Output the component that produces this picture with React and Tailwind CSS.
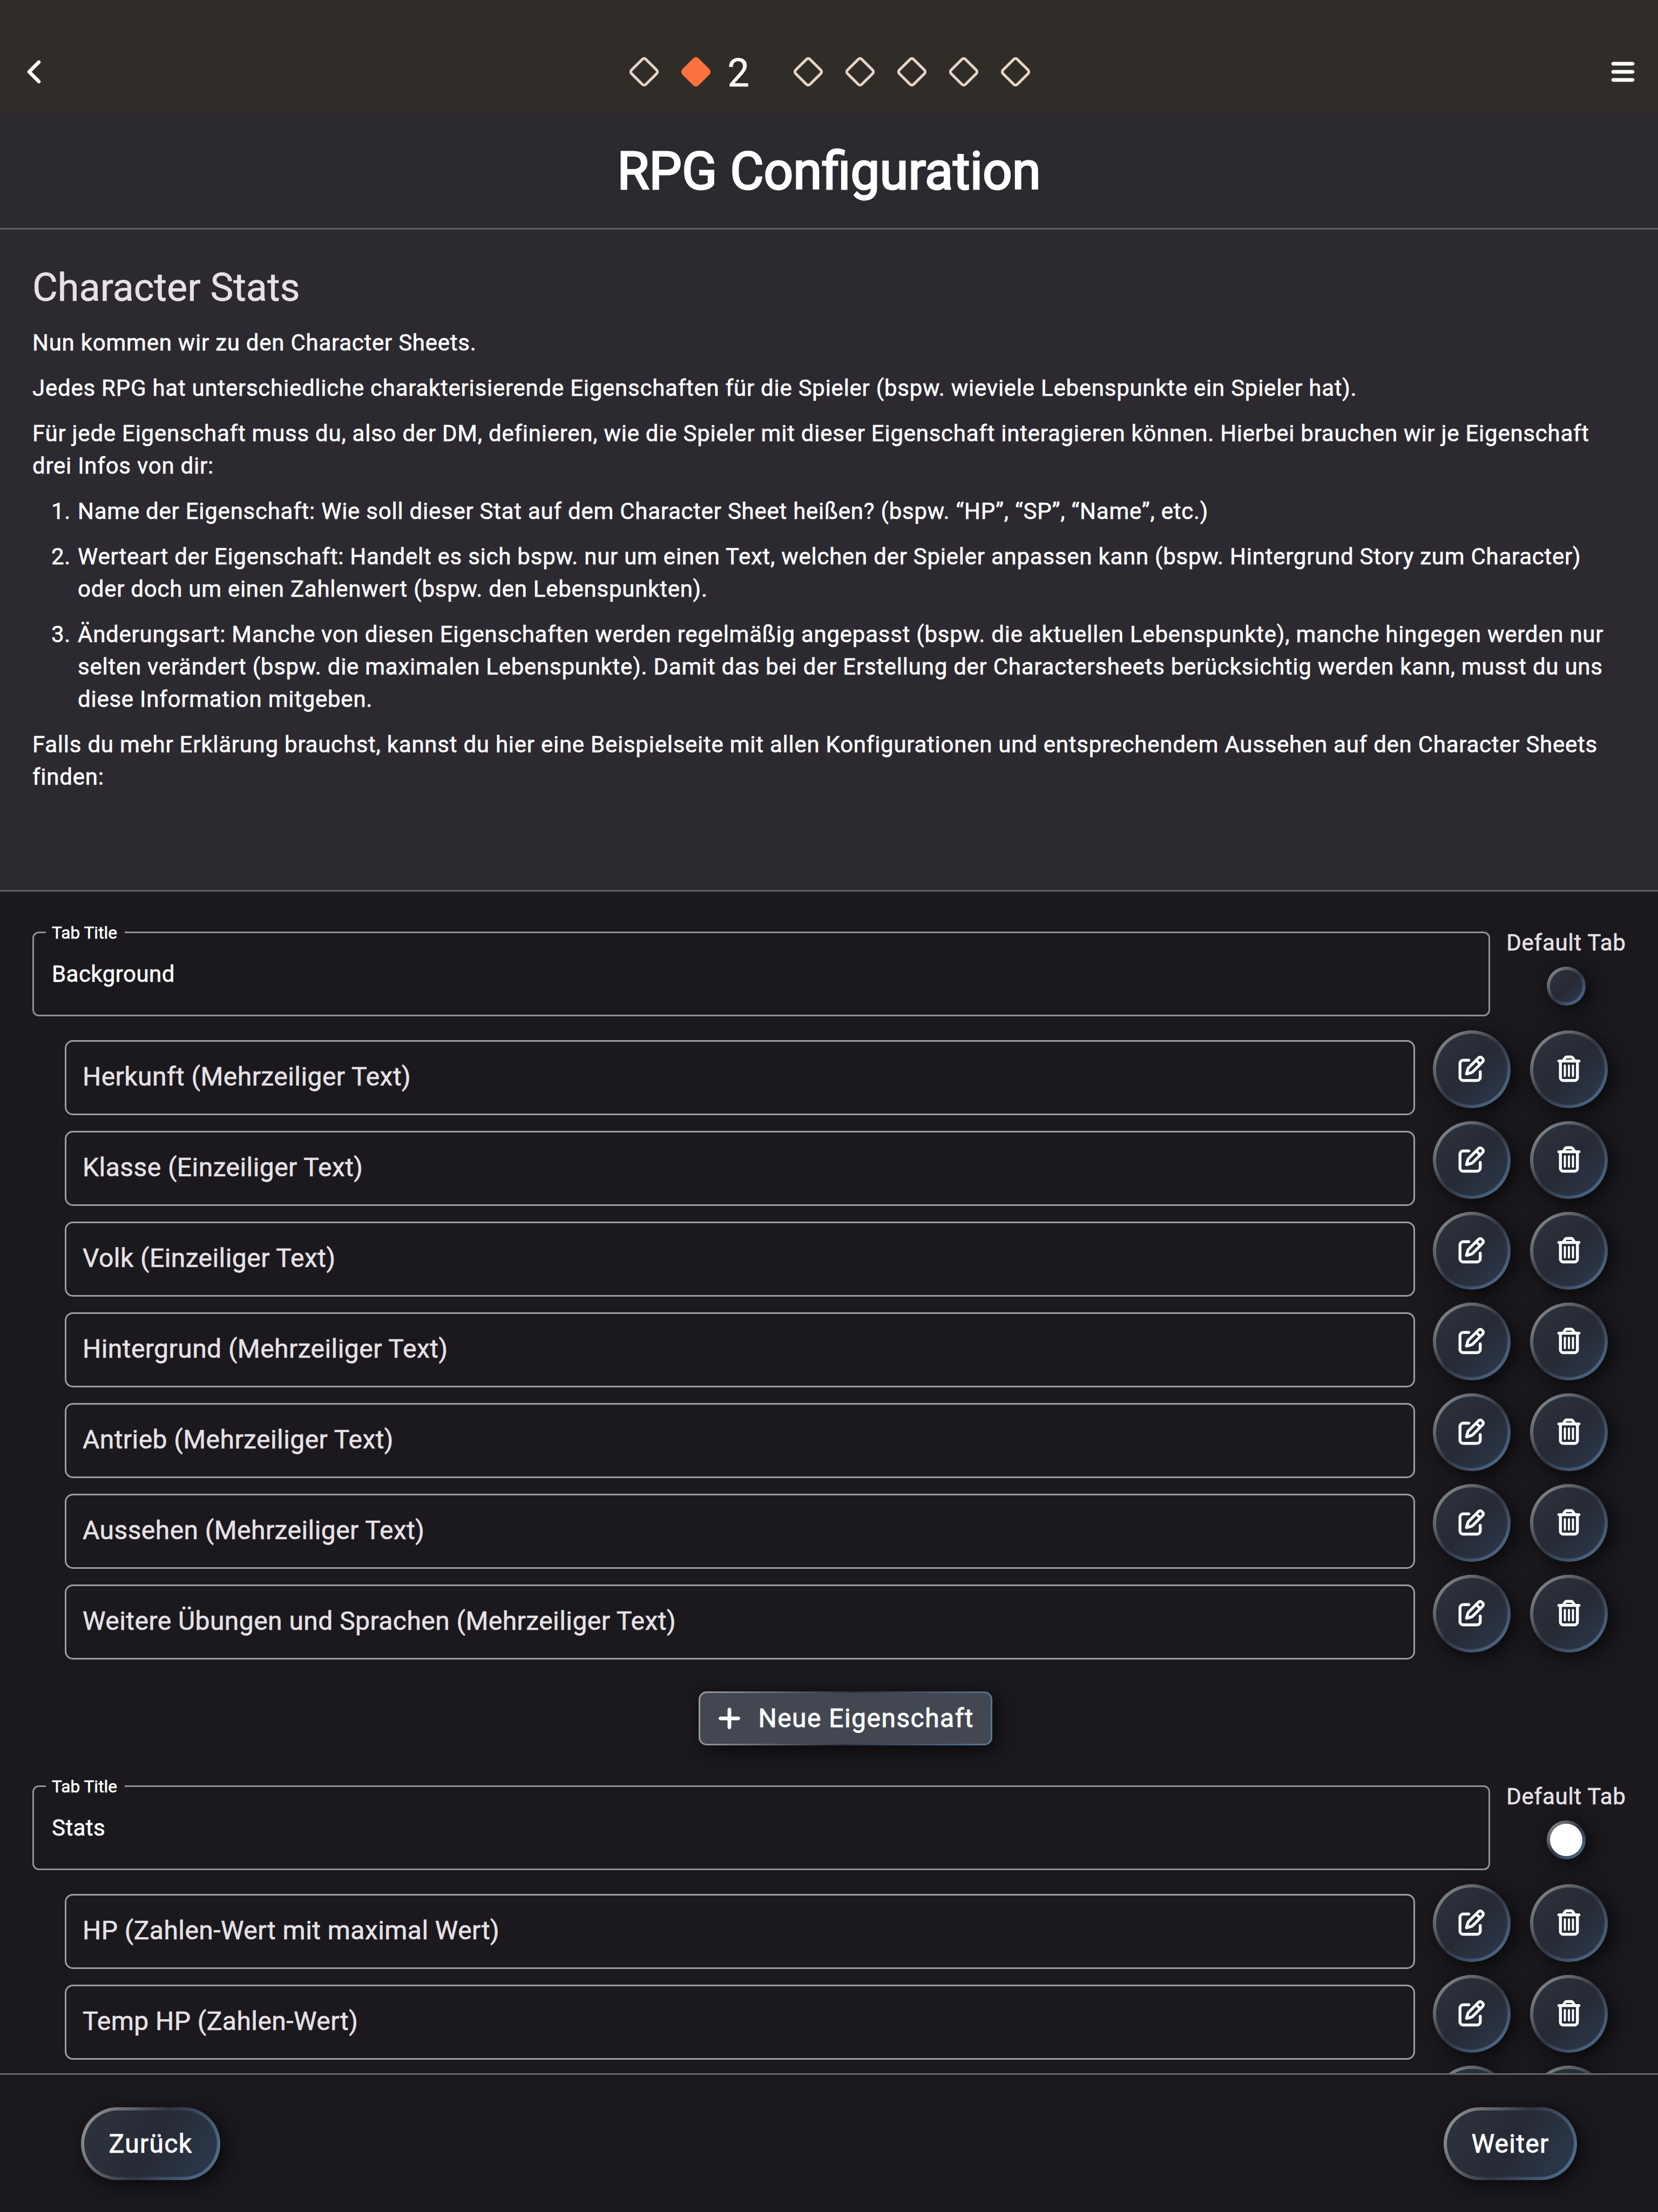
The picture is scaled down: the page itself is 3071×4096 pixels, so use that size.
import React from "react";
import { FaBars, FaChevronLeft, FaPlus, FaRegPenToSquare, FaRegTrashCan } from "react-icons/fa6";

const TABS = [
  {
    title: "Background",
    isDefault: false,
    stats: [
      "Herkunft (Mehrzeiliger Text)",
      "Klasse (Einzeiliger Text)",
      "Volk (Einzeiliger Text)",
      "Hintergrund (Mehrzeiliger Text)",
      "Antrieb (Mehrzeiliger Text)",
      "Aussehen (Mehrzeiliger Text)",
      "Weitere Übungen und Sprachen (Mehrzeiliger Text)",
    ],
    canAdd: true,
  },
  {
    title: "Stats",
    isDefault: true,
    stats: ["HP (Zahlen-Wert mit maximal Wert)", "Temp HP (Zahlen-Wert)", ""],
    canAdd: false,
  },
];

const INFOS = [
  ["Name der Eigenschaft: Wie soll dieser Stat auf dem Character Sheet heißen? (bspw. “HP”, “SP”, “Name”, etc.)"],
  [
    "Werteart der Eigenschaft: Handelt es sich bspw. nur um einen Text, welchen der Spieler anpassen kann (bspw. Hintergrund Story zum Character)",
    "oder doch um einen Zahlenwert (bspw. den Lebenspunkten).",
  ],
  [
    "Änderungsart: Manche von diesen Eigenschaften werden regelmäßig angepasst (bspw. die aktuellen Lebenspunkte), manche hingegen werden nur",
    "selten verändert (bspw. die maximalen Lebenspunkte). Damit das bei der Erstellung der Charactersheets berücksichtig werden kann, musst du uns",
    "diese Information mitgeben.",
  ],
];

function Diamond({ filled }) {
  return (
    <svg viewBox="0 0 56 56" className="h-[56px] w-[56px] shrink-0">
      <rect
        x="9.25"
        y="9.25"
        width="37.5"
        height="37.5"
        rx="4.5"
        transform="rotate(45 28 28)"
        fill={filled ? "#fd723d" : "none"}
        stroke={filled ? "#fd723d" : "#e6d5c3"}
        strokeWidth="5"
      />
    </svg>
  );
}

function Lines({ lines }) {
  return (
    <div className="whitespace-nowrap">
      {lines.map((line) => (
        <div key={line}>{line}</div>
      ))}
    </div>
  );
}

function RoundButton({ children }) {
  return (
    <div className="h-[144px] w-[144px] shrink-0 rounded-full bg-[linear-gradient(135deg,#9c9e9e_0%,#2f3440_50%,#57789b_100%)] p-[6px] shadow-[9px_9px_36px_rgba(0,0,0,0.7)]">
      <div className="flex h-full w-full items-center justify-center rounded-full bg-[linear-gradient(135deg,#2d333d_0%,#272a34_50%,#2b3a4f_100%)] pb-[3px]">
        {children}
      </div>
    </div>
  );
}

function StatRow({ label }) {
  return (
    <div className="flex h-[168px] items-start pl-[120px]">
      <div className="mt-[18px] flex h-[139px] w-[2501px] items-center rounded-[15px] border-[3px] border-[#9e9da1] pb-[4px] pl-[30px] text-[48px] leading-[72px] tracking-[0.45px]">
        {label}
      </div>
      <div className="ml-[33px] flex gap-[36px]">
        <RoundButton>
          <FaRegPenToSquare className="h-[48px] w-[48px] overflow-visible stroke-white stroke-[9] text-white" />
        </RoundButton>
        <RoundButton>
          <FaRegTrashCan className="h-[48px] w-[48px] overflow-visible stroke-white stroke-[9] text-white" />
        </RoundButton>
      </div>
    </div>
  );
}

function TabHeader({ title, isDefault }) {
  return (
    <div className="mb-[25px] flex h-[167px] items-start pl-[60px]">
      <div className="relative mt-[9px] flex h-[157px] w-[2700px] items-center rounded-[12px] border-[3px] border-[#938f99] pl-[33px] text-[42px] leading-[60px] tracking-[0.45px] text-white">
        <span className="absolute -top-[18px] left-[22px] w-[146px] bg-[#1b191e] pl-[11px] text-[31.5px] leading-[36px] tracking-[0.1px]">
          Tab Title
        </span>
        {title}
      </div>
      <div className="ml-[30px] flex w-[222px] flex-col items-center text-[42px] leading-[60px] tracking-[0.75px]">
        <span className="whitespace-nowrap">Default Tab</span>
        <div className="mt-[14px] h-[72px] w-[72px] rounded-full bg-[linear-gradient(135deg,#9c9e9e_0%,#2f3440_50%,#57789b_100%)] p-[6px] shadow-[9px_9px_36px_rgba(0,0,0,0.7)]">
          <div
            className={
              isDefault
                ? "h-full w-full rounded-full bg-white"
                : "h-full w-full rounded-full bg-[linear-gradient(135deg,#2d333d_0%,#272a34_50%,#2b3a4f_100%)]"
            }
          />
        </div>
      </div>
    </div>
  );
}

function AddButton() {
  return (
    <div className="mt-[48px] mb-[65px] flex justify-center pr-[60px] pl-[120px]">
      <div className="h-[100px] w-[544px] rounded-[15px] bg-[linear-gradient(100.4deg,#9c9e9e_0%,#2f3440_50%,#57789b_100%)] p-[3px] shadow-[9px_9px_36px_rgba(0,0,0,0.7)]">
        <div className="flex h-full w-full items-center rounded-[12px] bg-[#434751] pl-[33px] text-white">
          <FaPlus className="h-[48px] w-[42px] overflow-visible stroke-white stroke-[9]" />
          <span className="ml-[33px] text-[48px] leading-[60px] tracking-[1.45px] whitespace-nowrap [-webkit-text-stroke:0.9px_white]">Neue Eigenschaft</span>
        </div>
      </div>
    </div>
  );
}

export default function App() {
  return (
    <div className="flex h-[4096px] w-[3071px] flex-col overflow-hidden bg-[#1b191e] font-['Roboto',sans-serif] text-[#e6e1e6] [-webkit-text-stroke:0.6px_currentColor]">
      <header className="flex h-[209px] shrink-0 items-center justify-between bg-[#302d29] pt-[57px] text-white">
        <div className="w-[100px] pl-[51px]">
          <FaChevronLeft className="h-[48px] w-[30px] overflow-visible stroke-white stroke-[9]" />
        </div>
        <div className="flex items-center pl-[2px]">
          <Diamond />
          <div className="w-[40px]" />
          <Diamond filled />
          <span className="mt-[5px] ml-[31px] w-[121px] text-[72px] leading-[72px]">2</span>
          <div className="flex gap-[40px]">
            <Diamond />
            <Diamond />
            <Diamond />
            <Diamond />
            <Diamond />
          </div>
        </div>
        <div className="flex w-[100px] justify-end pr-[44px]">
          <FaBars className="h-[48px] w-[42px] overflow-visible stroke-white stroke-[9]" />
        </div>
      </header>

      <div className="flex h-[216px] shrink-0 items-center justify-center border-b-[3px] border-[#5f5e61] bg-[#2c2930] pt-[3px]">
        <h1 className="text-[96px] leading-[120px] font-normal text-white [-webkit-text-stroke:3px_white]">RPG Configuration</h1>
      </div>

      <section className="flex h-[1226px] shrink-0 flex-col gap-[24px] border-b-[3px] border-[#5f5e61] bg-[#2c2930] px-[60px] pt-[60px] text-[42px] leading-[60px] tracking-[0.75px] text-white">
        <h2 className="text-[72px] leading-[96px] tracking-normal text-[#e6e1e6] [-webkit-text-stroke:0.6px_#e6e1e6]">Character Stats</h2>
        <p>Nun kommen wir zu den Character Sheets.</p>
        <p>Jedes RPG hat unterschiedliche charakterisierende Eigenschaften für die Spieler (bspw. wieviele Lebenspunkte ein Spieler hat).</p>
        <Lines
          lines={[
            "Für jede Eigenschaft muss du, also der DM, definieren, wie die Spieler mit dieser Eigenschaft interagieren können. Hierbei brauchen wir je Eigenschaft",
            "drei Infos von dir:",
          ]}
        />
        {INFOS.map((lines, i) => (
          <div key={i} className="flex pl-[35px]">
            <span className="w-[49px] shrink-0">{i + 1}.</span>
            <Lines lines={lines} />
          </div>
        ))}
        <Lines
          lines={[
            "Falls du mehr Erklärung brauchst, kannst du hier eine Beispielseite mit allen Konfigurationen und entsprechendem Aussehen auf den Character Sheets",
            "finden:",
          ]}
        />
      </section>

      <main className="h-[2188px] shrink-0 overflow-hidden pt-[65px]">
        {TABS.map((tab) => (
          <div key={tab.title}>
            <TabHeader title={tab.title} isDefault={tab.isDefault} />
            {tab.stats.map((label, i) => (
              <StatRow key={i} label={label} />
            ))}
            {tab.canAdd && <AddButton />}
          </div>
        ))}
      </main>

      <footer className="flex grow items-start justify-between border-t-[3px] border-[#646465] px-[150px] pt-[60px] text-[48px] leading-[60px] text-white [-webkit-text-stroke:0.9px_white]">
        <div className="h-[135px] w-[258px] rounded-full bg-[linear-gradient(117.6deg,#9c9e9e_0%,#2f3440_50%,#57789b_100%)] p-[6px] shadow-[9px_9px_36px_rgba(0,0,0,0.7)]">
          <div className="flex h-full w-full items-center justify-center rounded-full bg-[linear-gradient(117.6deg,#2d333d_0%,#272a34_50%,#2b3a4f_100%)] tracking-[1.3px]">
            Zurück
          </div>
        </div>
        <div className="h-[135px] w-[247px] rounded-full bg-[linear-gradient(118.7deg,#9c9e9e_0%,#2f3440_50%,#57789b_100%)] p-[6px] shadow-[9px_9px_36px_rgba(0,0,0,0.7)]">
          <div className="flex h-full w-full items-center justify-center rounded-full bg-[linear-gradient(118.7deg,#2d333d_0%,#272a34_50%,#2b3a4f_100%)] tracking-[1.3px]">
            Weiter
          </div>
        </div>
      </footer>
    </div>
  );
}
